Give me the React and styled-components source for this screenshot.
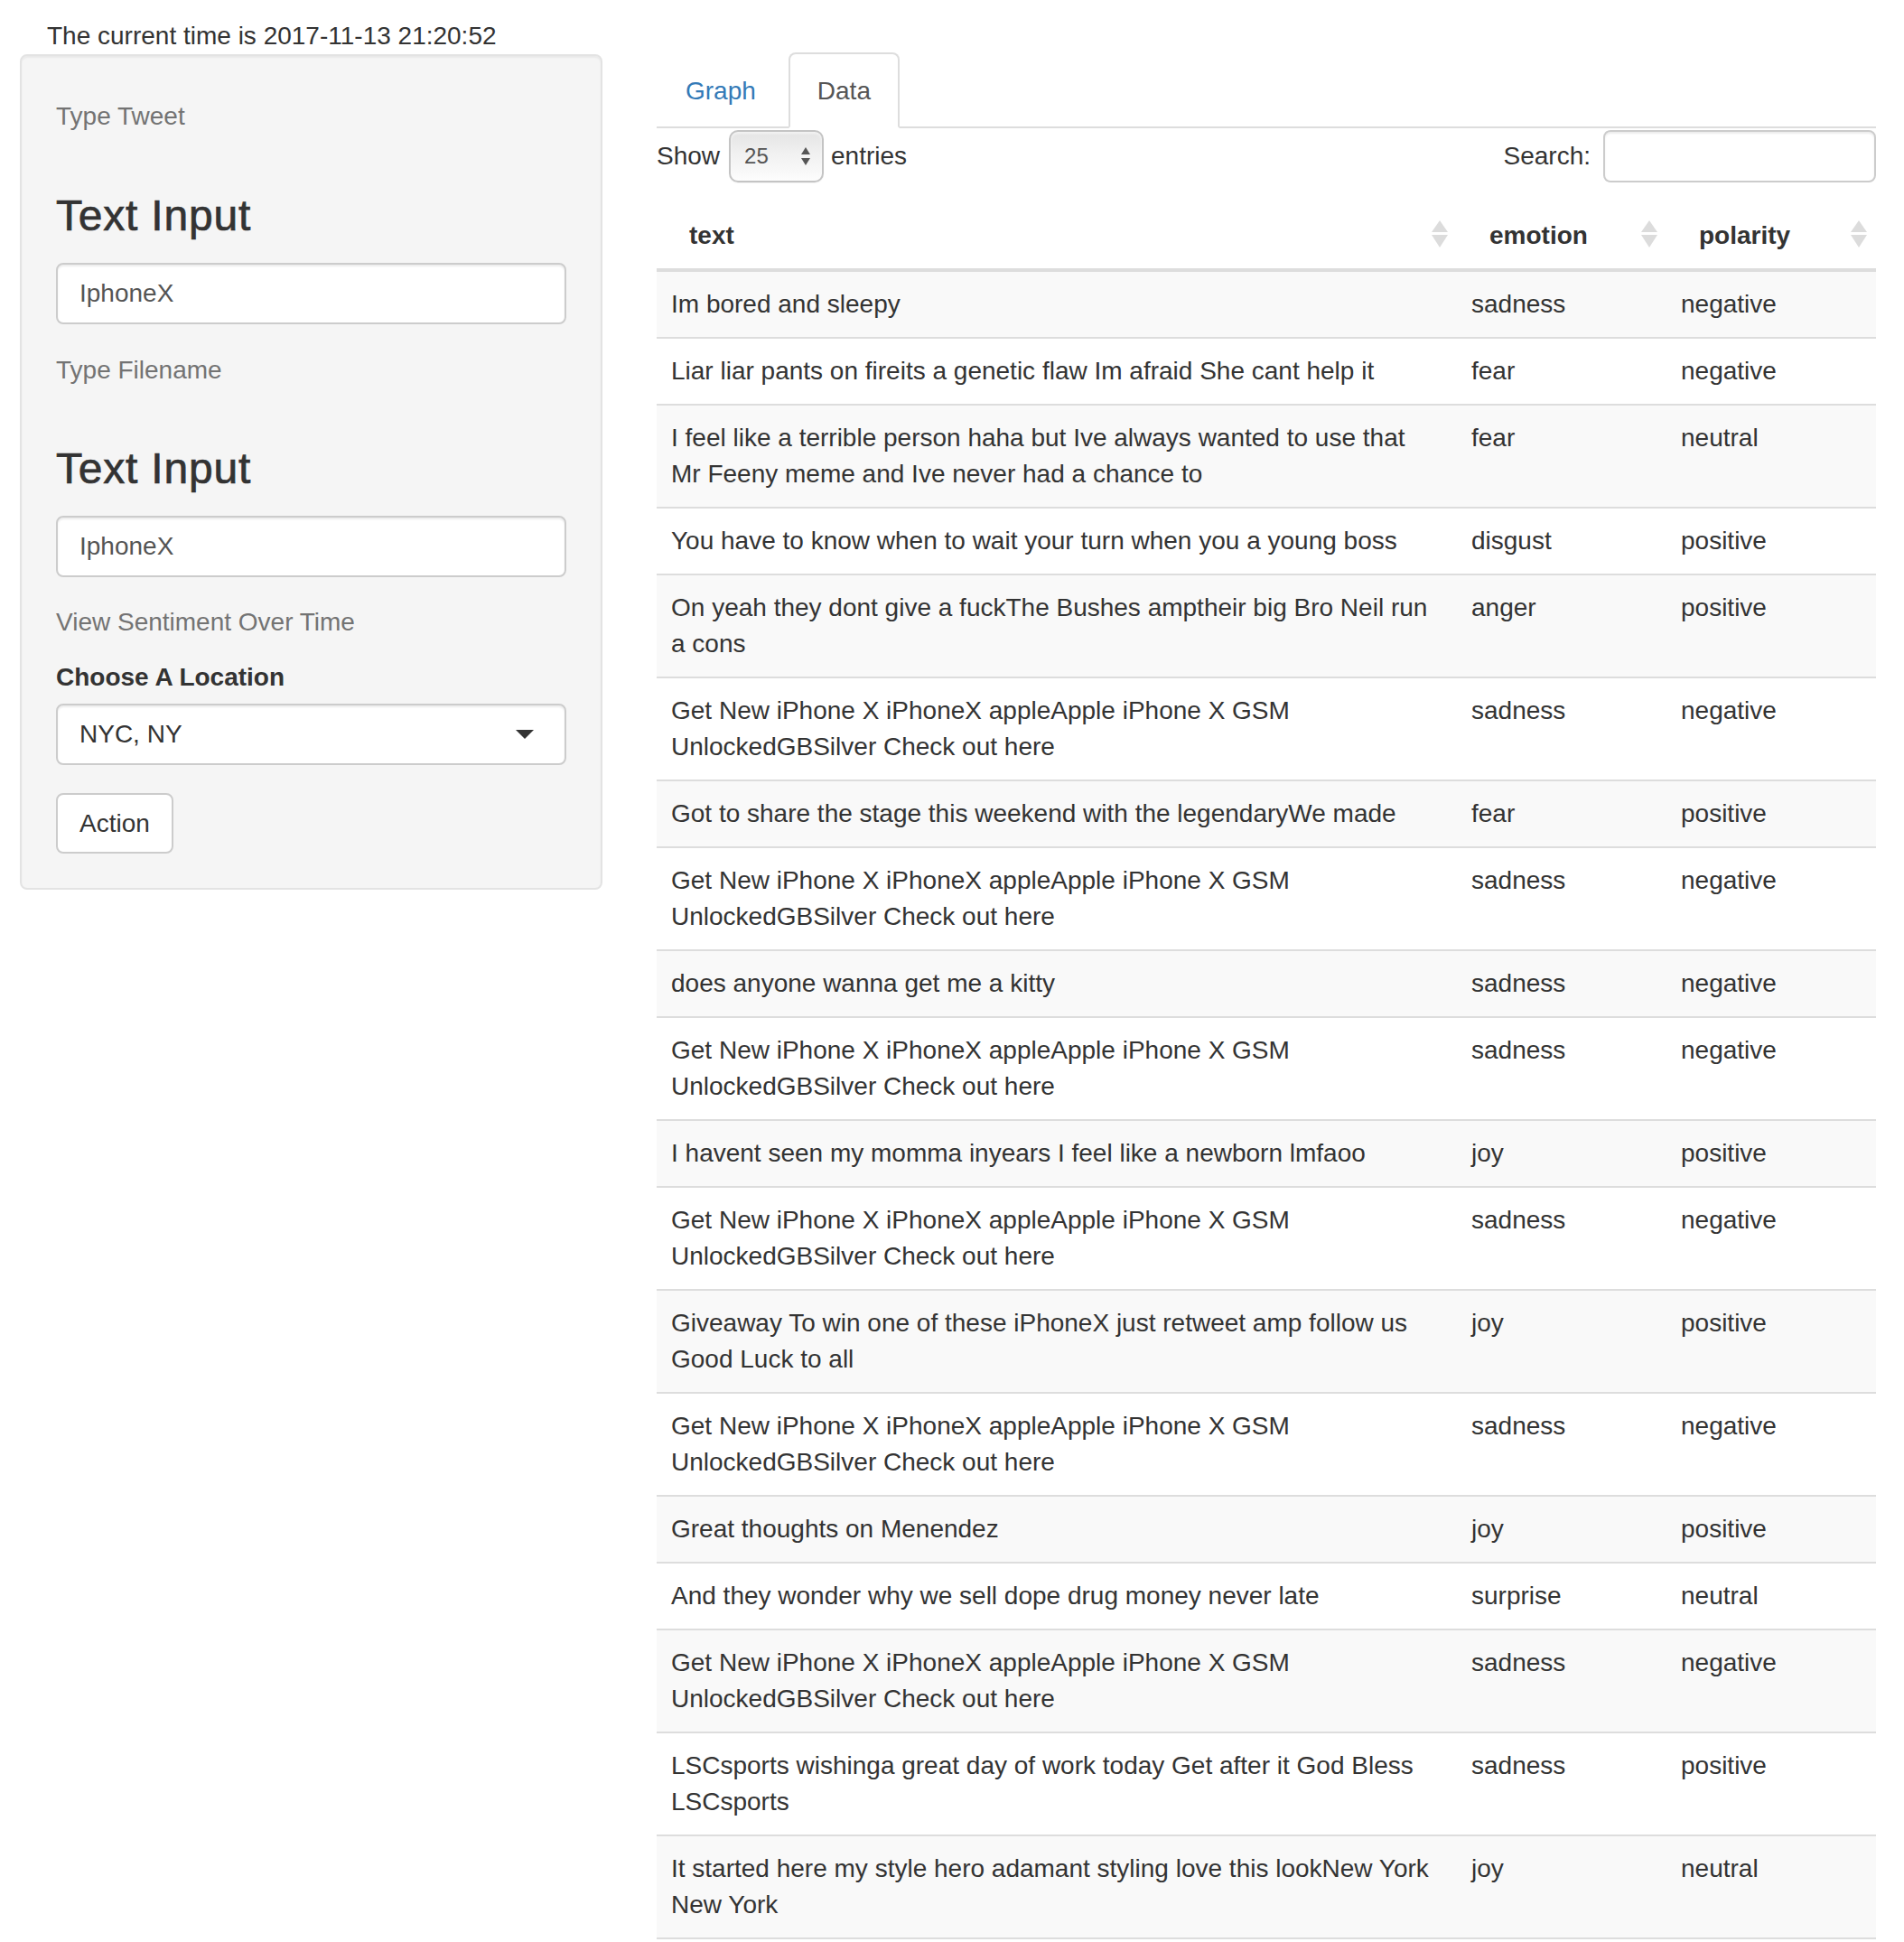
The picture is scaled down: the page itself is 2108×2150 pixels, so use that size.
import React from "react";
import styled, { createGlobalStyle } from "styled-components";

const GlobalStyle = createGlobalStyle`
  html, body {
    margin: 0;
    padding: 0;
    background: #fff;
    overflow: hidden;
  }
  body {
    font-family: "Liberation Sans", Arial, Helvetica, sans-serif;
    font-size: 28px;
    line-height: 40px;
    color: #333;
  }
  * {
    box-sizing: border-box;
  }
`;

const Page = styled.div`
  padding: 20px 31px 0 22px;
`;

const TimeText = styled.div`
  padding-left: 30px;
  line-height: 40px;
  color: #333;
`;

const Layout = styled.div`
  display: flex;
  align-items: flex-start;
  gap: 60px;
`;

const Well = styled.div`
  width: 645px;
  flex-shrink: 0;
  display: flex;
  flex-direction: column;
  padding: 38px;
  background: #f5f5f5;
  border: 2px solid #e3e3e3;
  border-radius: 8px;
  box-shadow: inset 0 2px 2px rgba(0, 0, 0, 0.05);
`;

const HelpText = styled.div`
  margin-top: ${(p) => p.$mt}px;
  color: #737373;
  line-height: 40px;
`;

const PanelHeading = styled.h3`
  margin: ${(p) => p.$mt}px 0 0;
  font-size: 48px;
  font-weight: 500;
  line-height: 53px;
  letter-spacing: 0.8px;
  color: #333;
  -webkit-text-stroke: 0.7px #333;
`;

const TextField = styled.input`
  display: block;
  width: 100%;
  height: 68px;
  margin-top: 26px;
  padding: 12px 24px;
  font: inherit;
  color: #555;
  background: #fff;
  border: 2px solid #ccc;
  border-radius: 8px;
  box-shadow: inset 0 2px 2px rgba(0, 0, 0, 0.075);
  outline: none;
`;

const FieldLabel = styled.div`
  margin-top: 21px;
  font-weight: bold;
  line-height: 40px;
`;

const Dropdown = styled.div`
  display: flex;
  align-items: center;
  justify-content: space-between;
  height: 68px;
  margin-top: 9px;
  padding: 0 34px 0 24px;
  background: #fff;
  border: 2px solid #ccc;
  border-radius: 8px;
  box-shadow: inset 0 2px 2px rgba(0, 0, 0, 0.075);
  color: #333;
`;

const Caret = styled.span`
  width: 0;
  height: 0;
  border-style: solid;
  border-width: 10px 10px 0 10px;
  border-color: #333 transparent transparent transparent;
`;

const ActionButton = styled.button`
  align-self: flex-start;
  height: 67px;
  margin-top: 31px;
  padding: 0 24px;
  font: inherit;
  color: #333;
  background: #fff;
  border: 2px solid #ccc;
  border-radius: 8px;
`;

const Main = styled.div`
  flex: 1;
  margin-top: -2px;
  min-width: 0;
`;

const TabNav = styled.ul`
  display: flex;
  margin: 0;
  padding: 0;
  list-style: none;
  border-bottom: 2px solid #ddd;
`;

const Tab = styled.li`
  margin: 0 4px -2px 0;
  padding: 21px 30px 19px;
  line-height: 40px;
  border: 2px solid transparent;
  border-radius: 8px 8px 0 0;
  color: ${(p) => (p.$active ? "#555" : "#337ab7")};
  ${(p) =>
    p.$active &&
    `
    background: #fff;
    border-color: #ddd #ddd transparent;
  `}
`;

const Toolbar = styled.div`
  display: flex;
  align-items: center;
  justify-content: space-between;
  padding-top: 2px;
`;

const ToolGroup = styled.label`
  display: flex;
  align-items: center;
  font-weight: normal;
`;

const LengthSelect = styled.div`
  display: flex;
  align-items: center;
  justify-content: space-between;
  width: 105px;
  height: 58px;
  margin: 0 8px 0 10px;
  padding: 0 12px 0 15px;
  font-size: 24px;
  color: #555;
  border: 2px solid #c4c4c4;
  border-radius: 10px;
  background: linear-gradient(to bottom, #e4e4e4 0%, #f1f1f1 45%, #f7f7f7 75%, #fdfdfd 100%);
  box-shadow: inset 0 2px 3px rgba(255, 255, 255, 0.6), 0 1px 1px rgba(0, 0, 0, 0.05);
`;

const SearchBox = styled.div`
  width: 302px;
  height: 58px;
  margin-left: 14px;
  background: #fff;
  border: 2px solid #ccc;
  border-radius: 8px;
  box-shadow: inset 0 2px 2px rgba(0, 0, 0, 0.075);
`;

const DataTable = styled.table`
  width: 100%;
  margin-top: 15px;
  table-layout: fixed;
  border-collapse: separate;
  border-spacing: 0;

  td:first-child {
    padding-right: 22px;
  }
`;

const HeadCell = styled.th`
  position: relative;
  padding: 24px 36px 16px;
  text-align: left;
  font-weight: bold;
  line-height: 40px;
  border-bottom: 4px solid #ddd;
`;

const SortIcon = styled.svg`
  position: absolute;
  right: 10px;
  top: 50%;
  margin-top: -13px;
`;

const Row = styled.tr`
  background: ${(p) => (p.$odd ? "#f9f9f9" : "#fff")};
`;

const Cell = styled.td`
  padding: 16px;
  vertical-align: top;
  line-height: 40px;
  border-bottom: 2px solid #ddd;
`;

const iphone =
  "Get New iPhone X iPhoneX appleApple iPhone X GSM UnlockedGBSilver Check out here";

const rows = [
  ["Im bored and sleepy", "sadness", "negative"],
  ["Liar liar pants on fireits a genetic flaw Im afraid She cant help it", "fear", "negative"],
  [
    "I feel like a terrible person haha but Ive always wanted to use that Mr Feeny meme and Ive never had a chance to",
    "fear",
    "neutral",
  ],
  ["You have to know when to wait your turn when you a young boss", "disgust", "positive"],
  [
    "On yeah they dont give a fuckThe Bushes amptheir big Bro Neil run a cons",
    "anger",
    "positive",
  ],
  [iphone, "sadness", "negative"],
  ["Got to share the stage this weekend with the legendaryWe made", "fear", "positive"],
  [iphone, "sadness", "negative"],
  ["does anyone wanna get me a kitty", "sadness", "negative"],
  [iphone, "sadness", "negative"],
  ["I havent seen my momma inyears I feel like a newborn lmfaoo", "joy", "positive"],
  [iphone, "sadness", "negative"],
  [
    "Giveaway To win one of these iPhoneX just retweet amp follow us Good Luck to all",
    "joy",
    "positive",
  ],
  [iphone, "sadness", "negative"],
  ["Great thoughts on Menendez", "joy", "positive"],
  ["And they wonder why we sell dope drug money never late", "surprise", "neutral"],
  [iphone, "sadness", "negative"],
  [
    "LSCsports wishinga great day of work today Get after it God Bless LSCsports",
    "sadness",
    "positive",
  ],
  [
    "It started here my style hero adamant styling love this lookNew York New York",
    "joy",
    "neutral",
  ],
];

const Sort = () => (
  <SortIcon width="18" height="30" viewBox="0 0 18 30">
    <polygon points="9,0 18,13 0,13" fill="#dcdcdc" />
    <polygon points="0,16 18,16 9,30" fill="#dcdcdc" />
  </SortIcon>
);

const Spinner = () => (
  <svg width="12" height="24" viewBox="0 0 12 24">
    <polygon points="6,2 11,10 1,10" fill="#555" />
    <polygon points="1,14 11,14 6,22" fill="#555" />
  </svg>
);

const App = () => {
  return (
    <Page>
      <GlobalStyle />
      <TimeText>The current time is 2017-11-13 21:20:52</TimeText>
      <Layout>
        <Well>
          <HelpText $mt={9}>Type Tweet</HelpText>
          <PanelHeading $mt={63}>Text Input</PanelHeading>
          <TextField readOnly defaultValue="IphoneX" />
          <HelpText $mt={31}>Type Filename</HelpText>
          <PanelHeading $mt={62}>Text Input</PanelHeading>
          <TextField readOnly defaultValue="IphoneX" />
          <HelpText $mt={30}>View Sentiment Over Time</HelpText>
          <FieldLabel>Choose A Location</FieldLabel>
          <Dropdown>
            <span>NYC, NY</span>
            <Caret />
          </Dropdown>
          <ActionButton>Action</ActionButton>
        </Well>

        <Main>
          <TabNav>
            <Tab>Graph</Tab>
            <Tab $active>Data</Tab>
          </TabNav>
          <Toolbar>
            <ToolGroup>
              Show
              <LengthSelect>
                <span>25</span>
                <Spinner />
              </LengthSelect>
              entries
            </ToolGroup>
            <ToolGroup>
              Search:
              <SearchBox />
            </ToolGroup>
          </Toolbar>
          <DataTable>
            <colgroup>
              <col style={{ width: 886 }} />
              <col style={{ width: 232 }} />
              <col style={{ width: 232 }} />
            </colgroup>
            <thead>
              <tr>
                <HeadCell>
                  text
                  <Sort />
                </HeadCell>
                <HeadCell>
                  emotion
                  <Sort />
                </HeadCell>
                <HeadCell>
                  polarity
                  <Sort />
                </HeadCell>
              </tr>
            </thead>
            <tbody>
              {rows.map((r, i) => (
                <Row key={i} $odd={i % 2 === 0}>
                  <Cell>{r[0]}</Cell>
                  <Cell>{r[1]}</Cell>
                  <Cell>{r[2]}</Cell>
                </Row>
              ))}
            </tbody>
          </DataTable>
        </Main>
      </Layout>
    </Page>
  );
};

export default App;
